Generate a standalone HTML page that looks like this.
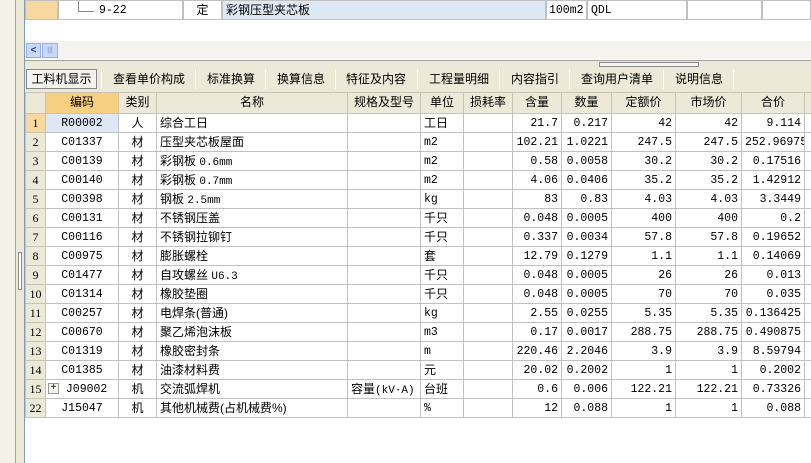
<!DOCTYPE html>
<html><head><meta charset="utf-8"><style>
*{margin:0;padding:0;box-sizing:border-box}
body{width:811px;height:463px;overflow:hidden;background:#ece9d8;font-family:"Liberation Sans","Noto Sans CJK SC","WenQuanYi Zen Hei",sans-serif;font-size:12px;color:#000;position:relative}
.abs{position:absolute}
table{border-collapse:collapse;table-layout:fixed}
tr{height:19px}
td{border:1px solid #c0c0c0;height:19px;max-height:19px;line-height:16px;padding:1px 3px 0;white-space:nowrap;overflow:hidden;font-size:12px;vertical-align:top}
.m{font-family:"Liberation Mono","Noto Sans CJK SC",monospace;font-size:11.5px}
td.m{padding-top:2px;line-height:15px}
td span.m{font-size:11px;line-height:10px}
.r{text-align:right}.c{text-align:center}
.hd{height:21px}
.hd td{background:#ece9d8;text-align:center;height:21px;line-height:19px;padding-top:0;border-color:#c8c4b0}
.n{background:#ece9d8;text-align:center;font-family:"Liberation Serif",serif;font-size:12px;border-color:#c8c4b0}
.tab{position:absolute;top:68px;height:22px;line-height:22px;font-size:12px}
.sep{position:absolute;top:69px;width:1px;height:20px;background:#b8b4a0;border-right:1px solid #fff}
</style></head><body>
<div class="abs" style="left:0;top:0;width:15px;height:463px;background:#f4f2e8"></div>
<div class="abs" style="left:15px;top:0;width:1px;height:463px;background:#a8a490"></div>
<div class="abs" style="left:18px;top:252px;width:4px;height:38px;border:1px solid #888;background:#fff"></div>
<div class="abs" style="left:24px;top:0;width:1px;height:463px;background:#7f9db9"></div>
<div class="abs" style="left:25px;top:0;width:786px;height:61px;background:#fff;border-bottom:1px solid #a0a0a0"></div>
<div class="abs" style="left:25px;top:0;width:33px;height:20px;background:#f8d8a0;border:1px solid #c0c0c0"></div>
<div class="abs" style="left:58px;top:0;width:125px;height:20px;border:1px solid #c0c0c0"><span class="abs" style="left:19px;top:0;width:1px;height:10px;background:#888"></span><span class="abs" style="left:19px;top:10px;width:16px;height:1px;background:#888"></span><span class="abs m" style="left:40px;top:3px">9-22</span></div>
<div class="abs c" style="left:183px;top:0;width:39px;height:20px;border:1px solid #c0c0c0;line-height:19px">定</div>
<div class="abs" style="left:222px;top:0;width:324px;height:20px;border:1px solid #c0c0c0;background:#dde8f4;line-height:19px;padding-left:3px">彩钢压型夹芯板</div>
<div class="abs m" style="left:546px;top:0;width:41px;height:20px;border:1px solid #c0c0c0;line-height:19px;padding-left:2px">100m2</div>
<div class="abs m" style="left:587px;top:0;width:100px;height:20px;border:1px solid #c0c0c0;line-height:19px;padding-left:3px">QDL</div>
<div class="abs" style="left:687px;top:0;width:75px;height:20px;border:1px solid #c0c0c0"></div>
<div class="abs" style="left:762px;top:0;width:49px;height:20px;border:1px solid #c0c0c0"></div>
<div class="abs" style="left:25px;top:41px;width:786px;height:18px;background:#f4f3ee"></div>
<div class="abs" style="left:26px;top:43px;width:15px;height:15px;background:#c8d8f8;border:1px solid #98b0e0;color:#204080;font-size:10px;line-height:13px;text-align:center;font-weight:bold">&lt;</div>
<div class="abs" style="left:42px;top:43px;width:16px;height:15px;background:#c8d8f8;border:1px solid #98b0e0;font-size:7px;line-height:13px;text-align:center;color:#8090c0">|||</div>
<div class="abs" style="left:599px;top:62px;width:100px;height:5px;border:1px solid #888;background:#f4f3ee"></div>
<div class="tab" style="left:26px;width:71px;border:1px solid #888;background:#f4f3ee;text-align:center;top:69px;height:20px;line-height:19px">工料机显示</div>
<div class="sep" style="left:101px"></div>
<div class="tab" style="left:113px">查看单价构成</div>
<div class="sep" style="left:195px"></div>
<div class="tab" style="left:207px">标准换算</div>
<div class="sep" style="left:265px"></div>
<div class="tab" style="left:277px">换算信息</div>
<div class="sep" style="left:335px"></div>
<div class="tab" style="left:346px">特征及内容</div>
<div class="sep" style="left:417px"></div>
<div class="tab" style="left:429px">工程量明细</div>
<div class="sep" style="left:499px"></div>
<div class="tab" style="left:511px">内容指引</div>
<div class="sep" style="left:569px"></div>
<div class="tab" style="left:581px">查询用户清单</div>
<div class="sep" style="left:663px"></div>
<div class="tab" style="left:675px">说明信息</div>
<div class="sep" style="left:733px"></div>
<div class="abs" style="left:25px;top:92px;width:786px;height:371px;background:#fff;border-top:1px solid #7f9db9"></div>
<table class="abs" style="left:25px;top:92px;width:800px">
<colgroup><col style="width:20px"><col style="width:73px"><col style="width:38px"><col style="width:191px"><col style="width:73px"><col style="width:43px"><col style="width:49px"><col style="width:49px"><col style="width:50px"><col style="width:64px"><col style="width:66px"><col style="width:63px"><col style="width:21px"></colgroup>
<tr class="hd"><td></td><td style="background:#f6cf80">编码</td><td>类别</td><td>名称</td><td>规格及型号</td><td>单位</td><td>损耗率</td><td>含量</td><td>数量</td><td>定额价</td><td>市场价</td><td>合价</td><td></td></tr>
<tr><td class="n" style="background:#f8d8a0">1</td><td class="c m" style="background:#dde8f4">R00002</td><td class="c">人</td><td>综合工日</td><td></td><td>工日</td><td></td><td class="r m">21.7</td><td class="r m">0.217</td><td class="r m">42</td><td class="r m">42</td><td class="r m">9.114</td><td></td></tr>
<tr><td class="n">2</td><td class="c m">C01337</td><td class="c">材</td><td>压型夹芯板屋面</td><td></td><td class="m">m2</td><td></td><td class="r m">102.21</td><td class="r m">1.0221</td><td class="r m">247.5</td><td class="r m">247.5</td><td class="r m">252.96975</td><td></td></tr>
<tr><td class="n">3</td><td class="c m">C00139</td><td class="c">材</td><td>彩钢板 <span class="m">0.6mm</span></td><td></td><td class="m">m2</td><td></td><td class="r m">0.58</td><td class="r m">0.0058</td><td class="r m">30.2</td><td class="r m">30.2</td><td class="r m">0.17516</td><td></td></tr>
<tr><td class="n">4</td><td class="c m">C00140</td><td class="c">材</td><td>彩钢板 <span class="m">0.7mm</span></td><td></td><td class="m">m2</td><td></td><td class="r m">4.06</td><td class="r m">0.0406</td><td class="r m">35.2</td><td class="r m">35.2</td><td class="r m">1.42912</td><td></td></tr>
<tr><td class="n">5</td><td class="c m">C00398</td><td class="c">材</td><td>钢板 <span class="m">2.5mm</span></td><td></td><td class="m">kg</td><td></td><td class="r m">83</td><td class="r m">0.83</td><td class="r m">4.03</td><td class="r m">4.03</td><td class="r m">3.3449</td><td></td></tr>
<tr><td class="n">6</td><td class="c m">C00131</td><td class="c">材</td><td>不锈钢压盖</td><td></td><td>千只</td><td></td><td class="r m">0.048</td><td class="r m">0.0005</td><td class="r m">400</td><td class="r m">400</td><td class="r m">0.2</td><td></td></tr>
<tr><td class="n">7</td><td class="c m">C00116</td><td class="c">材</td><td>不锈钢拉铆钉</td><td></td><td>千只</td><td></td><td class="r m">0.337</td><td class="r m">0.0034</td><td class="r m">57.8</td><td class="r m">57.8</td><td class="r m">0.19652</td><td></td></tr>
<tr><td class="n">8</td><td class="c m">C00975</td><td class="c">材</td><td>膨胀螺栓</td><td></td><td>套</td><td></td><td class="r m">12.79</td><td class="r m">0.1279</td><td class="r m">1.1</td><td class="r m">1.1</td><td class="r m">0.14069</td><td></td></tr>
<tr><td class="n">9</td><td class="c m">C01477</td><td class="c">材</td><td>自攻螺丝 <span class="m">U6.3</span></td><td></td><td>千只</td><td></td><td class="r m">0.048</td><td class="r m">0.0005</td><td class="r m">26</td><td class="r m">26</td><td class="r m">0.013</td><td></td></tr>
<tr><td class="n">10</td><td class="c m">C01314</td><td class="c">材</td><td>橡胶垫圈</td><td></td><td>千只</td><td></td><td class="r m">0.048</td><td class="r m">0.0005</td><td class="r m">70</td><td class="r m">70</td><td class="r m">0.035</td><td></td></tr>
<tr><td class="n">11</td><td class="c m">C00257</td><td class="c">材</td><td>电焊条(普通)</td><td></td><td class="m">kg</td><td></td><td class="r m">2.55</td><td class="r m">0.0255</td><td class="r m">5.35</td><td class="r m">5.35</td><td class="r m">0.136425</td><td></td></tr>
<tr><td class="n">12</td><td class="c m">C00670</td><td class="c">材</td><td>聚乙烯泡沫板</td><td></td><td class="m">m3</td><td></td><td class="r m">0.17</td><td class="r m">0.0017</td><td class="r m">288.75</td><td class="r m">288.75</td><td class="r m">0.490875</td><td></td></tr>
<tr><td class="n">13</td><td class="c m">C01319</td><td class="c">材</td><td>橡胶密封条</td><td></td><td class="m">m</td><td></td><td class="r m">220.46</td><td class="r m">2.2046</td><td class="r m">3.9</td><td class="r m">3.9</td><td class="r m">8.59794</td><td></td></tr>
<tr><td class="n">14</td><td class="c m">C01385</td><td class="c">材</td><td>油漆材料费</td><td></td><td>元</td><td></td><td class="r m">20.02</td><td class="r m">0.2002</td><td class="r m">1</td><td class="r m">1</td><td class="r m">0.2002</td><td></td></tr>
<tr><td class="n">15</td><td class="m" style="padding-left:2px"><span style="display:inline-block;width:11px;height:11px;border:1px solid #999;background:#f4f3ee;font-size:10px;line-height:9px;text-align:center;vertical-align:top;margin-top:1px">+</span>&nbsp;J09002</td><td class="c">机</td><td>交流弧焊机</td><td>容量<span class="m">(kV·A)</span></td><td>台班</td><td></td><td class="r m">0.6</td><td class="r m">0.006</td><td class="r m">122.21</td><td class="r m">122.21</td><td class="r m">0.73326</td><td></td></tr>
<tr><td class="n">22</td><td class="c m">J15047</td><td class="c">机</td><td>其他机械费(占机械费%)</td><td></td><td class="m">%</td><td></td><td class="r m">12</td><td class="r m">0.088</td><td class="r m">1</td><td class="r m">1</td><td class="r m">0.088</td><td></td></tr>
</table>
</body></html>
